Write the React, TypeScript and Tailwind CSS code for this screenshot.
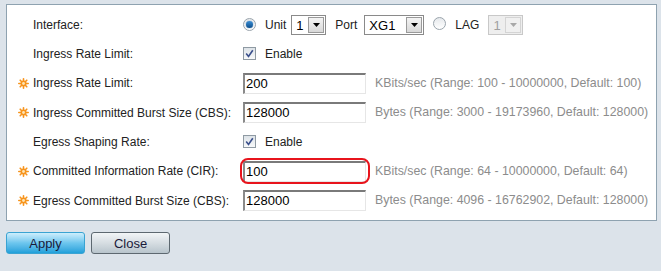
import React from "react";

const Star = () => (
  <svg width="11" height="11" viewBox="0 0 11 11" className="shrink-0">
    <g stroke="#f7941d" strokeWidth="1.6" strokeLinecap="round">
      <line x1="5.5" y1="0.8" x2="5.5" y2="10.2" />
      <line x1="0.8" y1="5.5" x2="10.2" y2="5.5" />
      <line x1="2.2" y1="2.2" x2="8.8" y2="8.8" />
      <line x1="8.8" y1="2.2" x2="2.2" y2="8.8" />
    </g>
    <circle cx="5.5" cy="5.5" r="3" fill="#f7941d" />
    <circle cx="5.5" cy="5.5" r="1.4" fill="#fde6b8" />
  </svg>
);

const Radio = ({ checked }: { checked?: boolean }) => (
  <span className="relative inline-flex h-[13px] w-[13px] items-center justify-center rounded-full border border-[#9aa4ac] bg-gradient-to-b from-[#e6e9ec] to-[#ffffff]">
    {checked && (
      <span className="h-[7px] w-[7px] rounded-full bg-gradient-to-b from-[#3a8fd6] to-[#0b4e8c] shadow-[0_0_1px_#0b4e8c]" />
    )}
  </span>
);

const Checkbox = () => (
  <span className="inline-flex h-[13px] w-[13px] items-center justify-center border border-[#8f9aa3] bg-gradient-to-b from-[#dde3e8] to-[#f8f9fa]">
    <svg width="9" height="9" viewBox="0 0 9 9">
      <path d="M1.2 4.6 L3.5 7.4 L7.8 1.2" stroke="#3a4f8c" strokeWidth="1.6" fill="none" />
    </svg>
  </span>
);

const Select = ({ value, w, disabled }: { value: string; w: string; disabled?: boolean }) => (
  <span
    className={`inline-flex h-[20px] items-center justify-between border ${
      disabled ? "border-[#c8c8c8] bg-[#eeeeee] text-[#a0a0a0]" : "border-[#8a8a8a] bg-white text-black"
    } ${w}`}
  >
    <span className="pl-[4px] text-[13px] leading-none">{value}</span>
    <span
      className={`mr-[1px] flex h-[16px] w-[16px] items-center justify-center border ${
        disabled ? "border-[#d4d4d4] bg-[#f0f0f0]" : "border-[#9a9a9a] bg-gradient-to-b from-[#f4f4f4] to-[#d8d8d8]"
      }`}
    >
      <svg width="7" height="4" viewBox="0 0 7 4">
        <path d="M0 0 L7 0 L3.5 4 Z" fill={disabled ? "#a8a8a8" : "#000"} />
      </svg>
    </span>
  </span>
);

const Input = ({ value, highlight }: { value: string; highlight?: boolean }) => (
  <div className="relative">
    <div className="flex h-[21px] w-[123px] items-center border-t-2 border-l-2 border-r border-b border-t-[#7a7a7a] border-l-[#8a8a8a] border-r-[#e6e6e6] border-b-[#e6e6e6] bg-white pl-[1px] text-[13px] text-black">
      {value}
    </div>
    {highlight && (
      <div className="pointer-events-none absolute -left-[3px] -top-[3px] h-[26px] w-[130px] rounded-[8px] border-2 border-[#e8141c]" />
    )}
  </div>
);

const Row = ({
  star,
  label,
  children,
  hint,
}: {
  star?: boolean;
  label: string;
  children: React.ReactNode;
  hint?: string;
}) => (
  <div className="flex h-[29.33px] items-center whitespace-nowrap">
    <div className="flex w-[236px] items-center">
      <div className="flex w-[26px] justify-end pr-[4px]">{star && <Star />}</div>
      <span className="text-[12px] text-[#222]">{label}</span>
    </div>
    <div className="flex items-center">{children}</div>
    {hint && <span className="ml-[9px] text-[12.35px] text-[#8c8c8c]">{hint}</span>}
  </div>
);

export default function App() {
  return (
    <div
      className="h-[271px] w-[661px] bg-[#dce3ea] pt-[4px]"
      style={{ fontFamily: '"Liberation Sans", Arial, sans-serif' }}
    >
      <div className="ml-[6px] w-[651px] border border-[#8ea2b0] bg-white pb-[5px] pt-[5px]">
        <Row label="Interface:">
          <div className="flex items-center">
            <Radio checked />
            <span className="ml-[9px] text-[12px] text-[#222]">Unit</span>
            <span className="ml-[5px]">
              <Select value="1" w="w-[35px]" />
            </span>
            <span className="ml-[9px] text-[12px] text-[#222]">Port</span>
            <span className="ml-[7px]">
              <Select value="XG1" w="w-[60px]" />
            </span>
            <span className="ml-[9px]">
              <Radio />
            </span>
            <span className="ml-[9px] text-[12px] text-[#222]">LAG</span>
            <span className="ml-[9px]">
              <Select value="1" w="w-[35px]" disabled />
            </span>
          </div>
        </Row>
        <Row label="Ingress Rate Limit:">
          <Checkbox />
          <span className="ml-[9px] text-[12px] text-[#222]">Enable</span>
        </Row>
        <Row star label="Ingress Rate Limit:" hint="KBits/sec (Range: 100 - 10000000, Default: 100)">
          <Input value="200" />
        </Row>
        <Row star label="Ingress Committed Burst Size (CBS):" hint="Bytes (Range: 3000 - 19173960, Default: 128000)">
          <Input value="128000" />
        </Row>
        <Row label="Egress Shaping Rate:">
          <Checkbox />
          <span className="ml-[9px] text-[12px] text-[#222]">Enable</span>
        </Row>
        <Row star label="Committed Information Rate (CIR):" hint="KBits/sec (Range: 64 - 10000000, Default: 64)">
          <Input value="100" highlight />
        </Row>
        <Row star label="Egress Committed Burst Size (CBS):" hint="Bytes (Range: 4096 - 16762902, Default: 128000)">
          <Input value="128000" />
        </Row>
      </div>
      <div className="ml-[6px] mt-[11px] flex gap-[6px]">
        <button className="flex h-[22px] w-[79px] items-center justify-center rounded-[3px] border border-[#3aa3d2] bg-gradient-to-b from-[#cdeefc] via-[#6cc6ee] to-[#1da0da] text-[13px] text-[#1a1a3a]">
          Apply
        </button>
        <button className="flex h-[22px] w-[79px] items-center justify-center rounded-[3px] border border-[#5d6870] bg-gradient-to-b from-[#f2f5f7] via-[#d6dde2] to-[#b8c4cc] text-[13px] text-[#1a1a3a]">
          Close
        </button>
      </div>
    </div>
  );
}
